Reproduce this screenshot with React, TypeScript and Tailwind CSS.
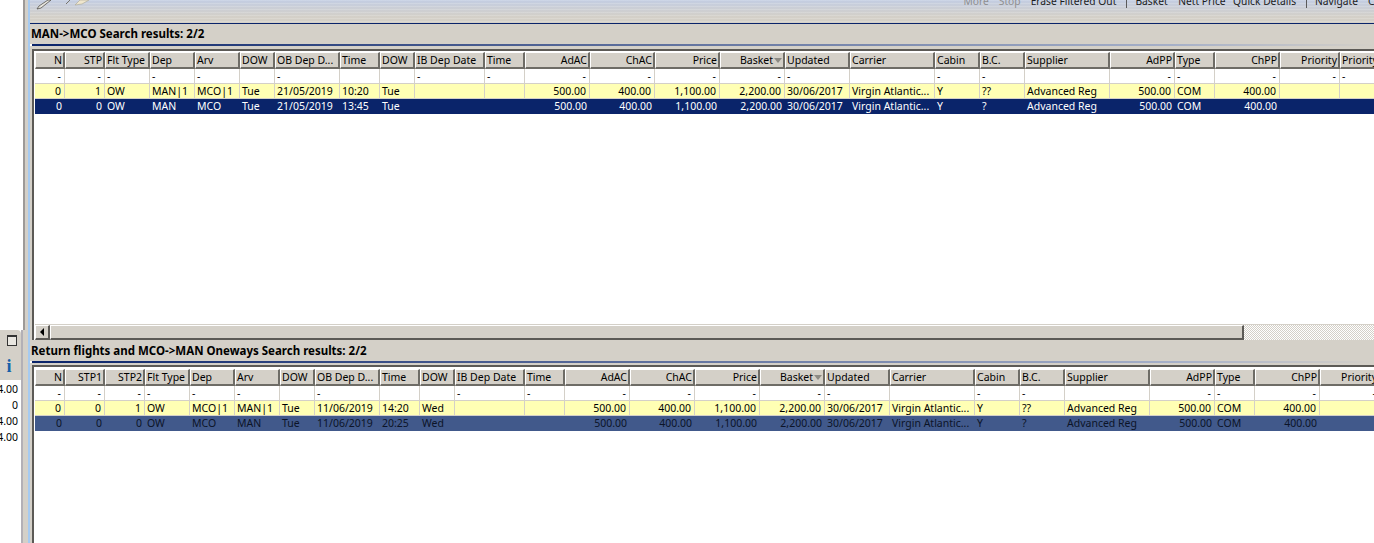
type Col = { h: string; r?: boolean; f?: boolean };

const font = "font-['Noto_Sans',sans-serif]";

const baseCols: Col[] = [
  { h: "Flt Type", f: true },
  { h: "Dep", f: true },
  { h: "Arv", f: true },
  { h: "DOW" },
  { h: "OB Dep D...", f: true },
  { h: "Time" },
  { h: "DOW" },
  { h: "IB Dep Date", f: true },
  { h: "Time", f: true },
  { h: "AdAC", r: true, f: true },
  { h: "ChAC", r: true, f: true },
  { h: "Price", r: true, f: true },
  { h: "Basket", r: true, f: true },
  { h: "Updated", f: true },
  { h: "Carrier" },
  { h: "Cabin", f: true },
  { h: "B.C.", f: true },
  { h: "Supplier" },
  { h: "AdPP", r: true, f: true },
  { h: "Type", f: true },
  { h: "ChPP", r: true, f: true },
  { h: "Priority", r: true, f: true },
  { h: "Priority", f: true },
];

function HeaderCell({ col }: { col: Col }) {
  return (
    <div
      className={`relative flex h-[17px] items-center overflow-hidden whitespace-nowrap border-t border-l border-t-white border-l-white border-r-2 border-b-2 border-r-[#6e6c66] border-b-[#6e6c66] bg-[#d4d0c8] pl-px pr-[1px] text-black ${
        col.r ? "justify-end" : "justify-start"
      }`}
    >
      <span className={col.h === "Basket" ? "pr-[9px]" : ""}>{col.h}</span>
      {col.h === "Basket" && (
        <span className="absolute right-[1px] top-[5px] h-0 w-0 border-x-[4px] border-t-[5px] border-x-transparent border-t-[#8c8a84]" />
      )}
    </div>
  );
}

function Cell({ text, r, tone }: { text: string; r?: boolean; tone: string }) {
  return (
    <div
      className={`flex h-[15px] items-center overflow-hidden whitespace-nowrap px-[2px] ${tone} ${
        r ? "justify-end pr-[3px]" : "justify-start"
      }`}
    >
      {text}
    </div>
  );
}

function Table({
  grid,
  cols,
  rows,
  selected,
}: {
  grid: string;
  cols: Col[];
  rows: string[][];
  selected: string;
}) {
  return (
    <div className={`w-max text-[10.5px] leading-none ${font}`}>
      <div className={`grid ${grid}`}>
        {cols.map((c, i) => (
          <HeaderCell key={i} col={c} />
        ))}
      </div>
      <div className={`grid ${grid}`}>
        {cols.map((c, i) => (
          <Cell
            key={i}
            text={c.f ? "-" : ""}
            r={c.r}
            tone="border-r border-b border-[#d4d0c8] bg-white text-black"
          />
        ))}
      </div>
      <div className={`grid ${grid}`}>
        {cols.map((c, i) => (
          <Cell
            key={i}
            text={rows[0][i] ?? ""}
            r={c.r}
            tone="border-r border-b border-[#d4d0c8] bg-[#ffffb4] text-black"
          />
        ))}
      </div>
      <div className={`grid ${grid}`}>
        {cols.map((c, i) => (
          <Cell key={i} text={rows[1][i] ?? ""} r={c.r} tone={`pb-px ${selected}`} />
        ))}
      </div>
    </div>
  );
}

const fare = ["500.00", "400.00", "1,100.00", "2,200.00", "30/06/2017", "Virgin Atlantic...", "Y"];

const rowTail = (bc: string) => [...fare, bc, "Advanced Reg", "500.00", "COM", "400.00", "", ""];

const outCols: Col[] = [{ h: "N", r: true, f: true }, { h: "STP", r: true, f: true }, ...baseCols];
const retCols: Col[] = [
  { h: "N", r: true, f: true },
  { h: "STP1", r: true, f: true },
  { h: "STP2", r: true, f: true },
  ...baseCols,
];

const outRows = [
  ["0", "1", "OW", "MAN|1", "MCO|1", "Tue", "21/05/2019", "10:20", "Tue", "", "", ...rowTail("??")],
  ["0", "0", "OW", "MAN", "MCO", "Tue", "21/05/2019", "13:45", "Tue", "", "", ...rowTail("?")],
];
const retRows = [
  ["0", "0", "1", "OW", "MCO|1", "MAN|1", "Tue", "11/06/2019", "14:20", "Wed", "", "", ...rowTail("??")],
  ["0", "0", "0", "OW", "MCO", "MAN", "Tue", "11/06/2019", "20:25", "Wed", "", "", ...rowTail("?")],
];

const outGrid =
  "grid-cols-[30px_40px_45px_45px_45px_35px_65px_40px_35px_70px_40px_65px_65px_65px_65px_65px_85px_45px_45px_85px_65px_40px_65px_60px_60px]";
const retGrid =
  "grid-cols-[30px_40px_40px_45px_45px_45px_35px_65px_40px_35px_70px_40px_65px_65px_65px_65px_65px_85px_45px_45px_85px_65px_40px_65px_60px_60px]";

function Toolbar() {
  return (
    <div
      className={`relative flex h-[23px] items-start overflow-hidden bg-[repeating-linear-gradient(180deg,rgba(255,255,255,0.16)_0,rgba(255,255,255,0.16)_1px,transparent_1px,transparent_3px),linear-gradient(180deg,#c3cde2_0,#d4d0c8_17px)] text-[10.25px] leading-none text-[#1c1c1c] ${font}`}
    >
      <svg width="60" height="10" viewBox="0 0 60 10" className="ml-[6px] shrink-0">
        <path d="M1 9 L3 6 L12 0 L15 0 L5 8 Z" fill="#e8e6df" stroke="#55534d" strokeWidth="0.8" />
        <path d="M30 4 L34 0" stroke="#77756e" strokeWidth="1" />
        <path d="M39 5 L44 0 L53 0 L46 4 Z" fill="#efe6cd" stroke="#aaa694" strokeWidth="0.6" />
      </svg>
      <div className="ml-auto flex -translate-y-[6px] items-center whitespace-nowrap">
        <span className="mr-[10px] text-[#8f8f8f]">More</span>
        <span className="mr-[10px] text-[#8f8f8f]">Stop</span>
        <span className="mr-[10px]">Erase Filtered Out</span>
        <span className="mr-[8px] h-[14px] w-px bg-[#5a5a5a]" />
        <span className="mr-[10.5px]">Basket</span>
        <span className="mr-[7.5px]">Nett Price</span>
        <span className="mr-[10px]">Quick Details</span>
        <span className="mr-[8px] h-[14px] w-px bg-[#5a5a5a]" />
        <span className="mr-[10px]">Navigate</span>
        <span className="w-[6px] overflow-hidden">C</span>
      </div>
    </div>
  );
}

function Title({ text }: { text: string }) {
  return (
    <div
      className={`flex h-[20px] items-center bg-[#d4d0c8] pb-[1px] pl-px text-[11.5px] font-bold leading-none text-black ${font}`}
    >
      {text}
    </div>
  );
}

function Rule() {
  return (
    <div className="ml-[2px] h-[2px] bg-[linear-gradient(90deg,#0a246a,#a6b0c8_85%,#d4d0c8)]" />
  );
}

function Frame({ children, className }: { children: React.ReactNode; className: string }) {
  return (
    <div className={`ml-[2px] overflow-hidden border-t-2 border-l-2 border-[#5c5a56] bg-white pl-px ${className}`}>
      {children}
    </div>
  );
}

function SidePanel() {
  return (
    <aside className="flex w-[28px] shrink-0 flex-col">
      <div className="flex h-[330px]">
        <div className="w-[23px] bg-white" />
        <div className="w-[2px] bg-[#9d9a98]" />
        <div className="flex-1 bg-[#d4d0c8]" />
      </div>
      <div className="flex flex-1">
        <div className="flex w-[21px] flex-col overflow-hidden">
          <div className="flex h-[22px] items-start justify-center rounded-tr-[4px] bg-[#d4d0c8] pl-[3px] pt-[5px]">
            <div className="h-[11px] w-[10px] border border-[#333333] border-t-[2px] bg-[#e8e6e0]" />
          </div>
          <div className="flex h-[28px] items-center justify-center bg-[#d4d0c8] pr-[3px]">
            <span className="font-['Liberation_Serif',serif] text-[18px] font-bold leading-none text-[#1560a8]">i</span>
          </div>
          <div className={`flex flex-col pt-px text-[10.5px] leading-none text-black ${font}`}>
            {["4.00", "0", "4.00", "4.00"].map((v, i) => (
              <div key={i} className="flex h-[16px] items-center justify-end pr-[3px]">
                {v}
              </div>
            ))}
          </div>
        </div>
        <div className="w-[2px] bg-[#b3b0b6]" />
        <div className="flex-1 bg-[#d4d0c8]" />
      </div>
    </aside>
  );
}

function Scrollbar() {
  return (
    <div className="flex h-[16px] border-t border-[#d4d0c8] bg-white">
      <div className="flex w-[15px] items-center justify-center border-t border-l border-t-white border-l-white border-r-2 border-b-2 border-[#5c5a56] border-t-white border-l-white bg-[#d4d0c8]">
        <span className="h-0 w-0 border-y-[4px] border-r-[4px] border-y-transparent border-r-black" />
      </div>
      <div className="w-[1194px] border-t border-l border-t-white border-l-white border-r-2 border-b-2 border-[#5c5a56] border-t-white border-l-white bg-[#d4d0c8]" />
      <div className="flex-1 bg-[repeating-conic-gradient(#d4d0c8_0_25%,#ffffff_0_50%)] bg-[length:2px_2px]" />
    </div>
  );
}

export default function App() {
  return (
    <div className="flex h-[543px] w-[1374px] overflow-hidden bg-white">
      <SidePanel />
      <div className="w-[2px] shrink-0 bg-[#a6caf0]" />
      <main className="flex min-w-0 flex-1 flex-col">
        <Toolbar />
        <div className="h-px bg-[#0a246a]" />
        <Title text="MAN->MCO Search results: 2/2" />
        <Rule />
        <div className="h-[3px] bg-[#d4d0c8]" />
        <div className="flex h-[291px] bg-[#d4d0c8]">
          <Frame className="flex w-full flex-col justify-between pt-px">
            <Table
              grid={outGrid}
              cols={outCols}
              rows={outRows}
              selected="bg-[#0a246a] text-white"
            />
            <Scrollbar />
          </Frame>
        </div>
        <div className="flex h-[1px] bg-[#d4d0c8]" />
        <Title text="Return flights and MCO->MAN Oneways Search results: 2/2" />
        <Rule />
        <div className="h-[2px] bg-[#d4d0c8]" />
        <div className="flex flex-1 bg-[#d4d0c8]">
          <Frame className="w-full pt-[2px]">
            <Table
              grid={retGrid}
              cols={retCols}
              rows={retRows}
              selected="bg-[#41598b] text-[#0c1428]"
            />
          </Frame>
        </div>
      </main>
    </div>
  );
}
